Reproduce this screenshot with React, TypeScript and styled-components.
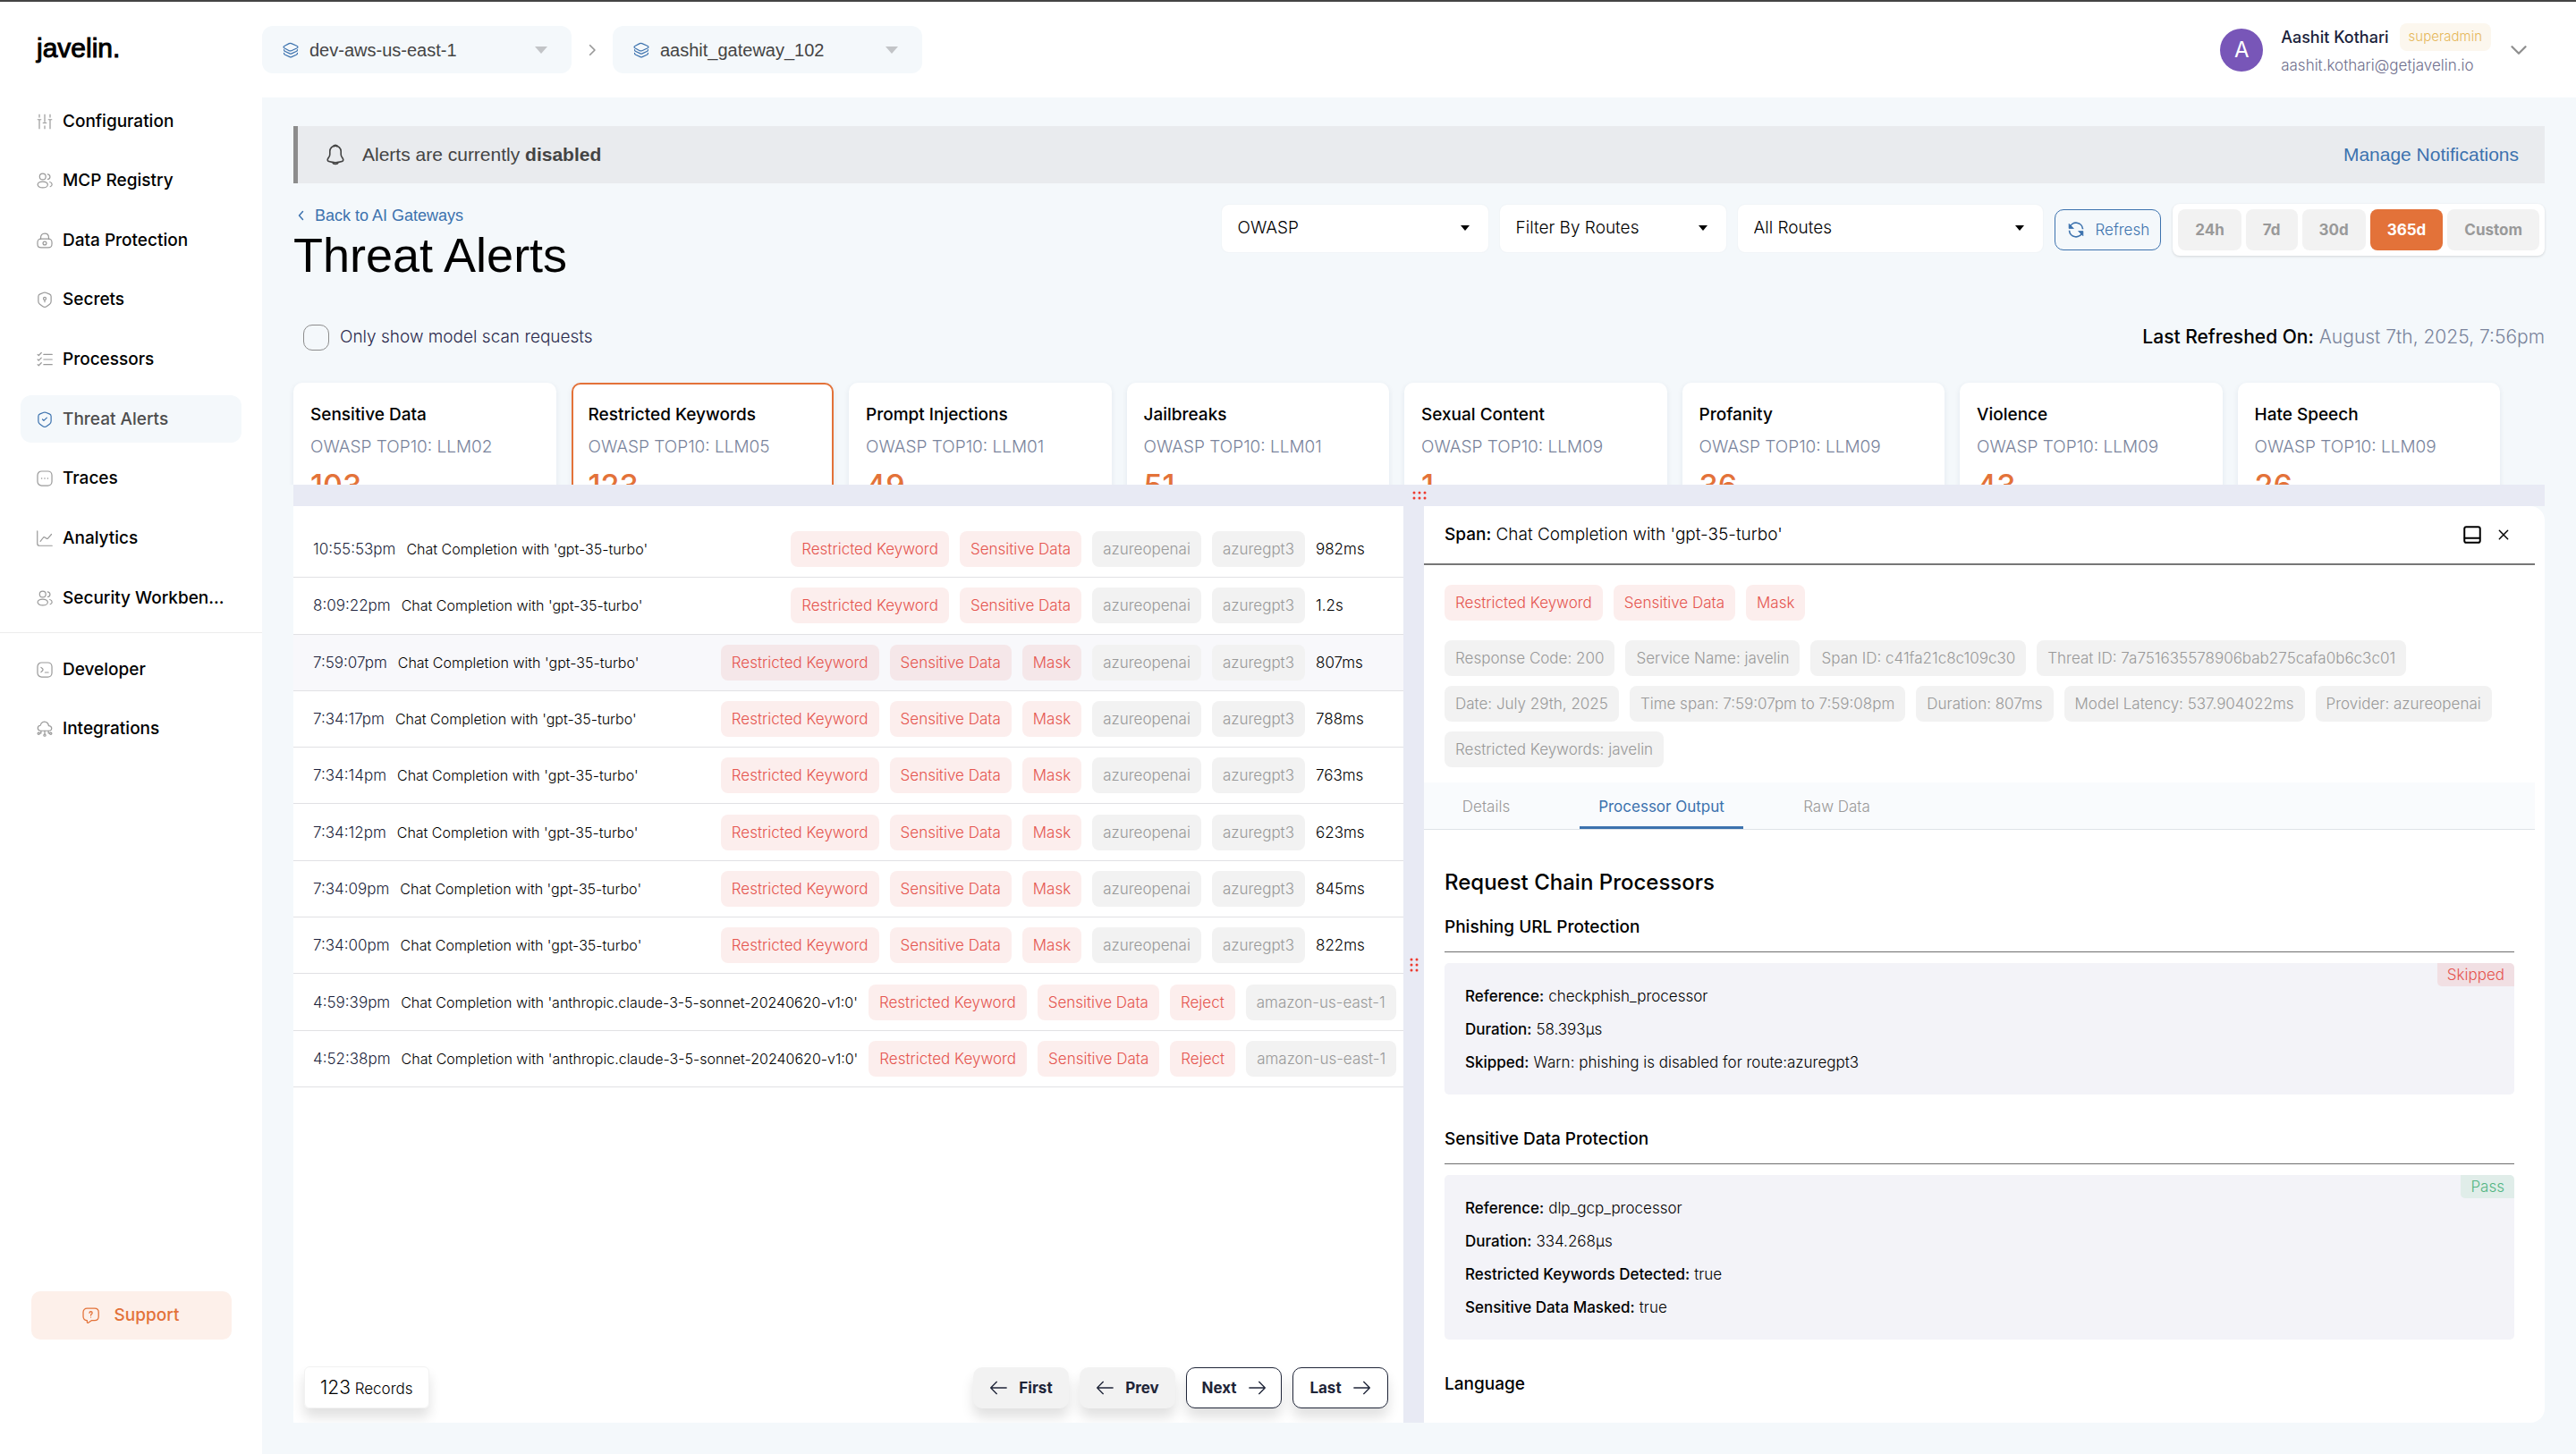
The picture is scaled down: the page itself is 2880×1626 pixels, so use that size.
import React from "react";
import styled, { createGlobalStyle, css } from "styled-components";

const color = {
  blue: "#3c72ae",
  orange: "#e37239",
  page: "#f4f8fb",
  split: "#e8eaf4",
  grey: "#999999",
  chip: "#f2f2f2",
  red: "#e5554f",
  ink: "#1f2538",
};

const grotesque = `"Liberation Sans", Arial, sans-serif`;

const GlobalStyle = createGlobalStyle`
  *, *::before, *::after { box-sizing: border-box; }
  body {
    margin: 0;
    background: ${color.page};
    color: #000;
    font-family: Inter, "Liberation Sans", sans-serif;
    font-size: 19px;
    font-weight: 400;
    line-height: 24px;
  }
  button, input, select { font: inherit; color: inherit; }
  button { border: 0; background: none; padding: 0; cursor: pointer; }
  h1, h2, h3, p, ul, ol, dl, dd { margin: 0; padding: 0; }
  ul, ol { list-style: none; }
  a { text-decoration: none; }
`;

/* ---------- icons ---------- */

const Glyph = styled.svg<{ $size?: number }>`
  display: block;
  flex: none;
  width: ${(p) => p.$size ?? 18}px;
  height: ${(p) => p.$size ?? 18}px;
  fill: none;
  stroke: currentColor;
  stroke-width: 1.6;
  stroke-linecap: round;
  stroke-linejoin: round;
`;

const paths: Record<string, React.ReactNode> = {
  sliders: (
    <path strokeLinecap="butt" d="M4 1v5M1 9h6M4 9v14M12 1v12M9 14h6M12 18v5M20 1v5M17 9h6M20 9v14" />
  ),
  users: (
    <>
      <circle cx="9" cy="6" r="4.6" />
      <ellipse cx="9" cy="18" rx="7.5" ry="4.6" />
      <path d="M16.5 2.4c2 .4 3.4 1.9 3.4 3.8s-1.400 3.400-3.200 3.700M19.600 14c2 .6 3.300 1.900 3.300 3.700 0 1.500-1 2.700-2.700 3.300" />
    </>
  ),
  lock: (
    <>
      <path d="M6 9.500V8c0-4 2-6.500 6-6.500S18 4 18 8v1.500" />
      <path d="M17 22.500H7c-4.500 0-5.700-1.200-5.700-5.500v-2c0-4.300 1.200-5.500 5.700-5.500h10c4.500 0 5.700 1.200 5.700 5.500v2c0 4.300-1.200 5.500-5.700 5.500z" />
      <circle cx="12" cy="16" r="2.600" />
    </>
  ),
  secret: (
    <>
      <path d="M10.500 1.700 5 3.800C3.600 4.300 2.500 5.900 2.500 7.400v7.300c0 1.500 1 3.400 2.200 4.300l4.600 3.200c1.500 1.100 3.900 1.100 5.400 0l4.600-3.200c1.200-.9 2.200-2.800 2.200-4.300V7.400c0-1.500-1.100-3.100-2.500-3.600l-5.500-2.100c-.9-.3-2.100-.3-3 0z" />
      <circle cx="12" cy="10.500" r="2" />
      <path d="M12 12.500v3" />
    </>
  ),
  shield: (
    <>
      <path d="M10.500 1.700 5 3.800C3.600 4.300 2.500 5.900 2.500 7.400v7.300c0 1.500 1 3.400 2.200 4.300l4.600 3.200c1.500 1.100 3.900 1.100 5.400 0l4.600-3.200c1.200-.9 2.200-2.800 2.200-4.300V7.400c0-1.500-1.100-3.100-2.500-3.600l-5.500-2.100c-.9-.3-2.100-.3-3 0z" />
      <path d="m8.700 12 1.900 1.900 4.500-4.500" />
    </>
  ),
  checks: (
    <path d="M10.500 4.500H23M10.500 12H23M10.500 19.500H23M1.500 4.500l1.500 1.500 4-4M1.500 12l1.500 1.500 4-4M1.500 19.500 3 21l4-4" />
  ),
  dots: (
    <>
      <rect x="1.300" y="1.300" width="21.400" height="21.400" rx="6" />
      <path strokeWidth="2.200" d="M7.500 12h.01M12 12h.01M16.500 12h.01" />
    </>
  ),
  chart: <path d="M1 1v18.500C1 21.500 2.500 23 4.500 23H23M5.500 16.500 9.800 11c.7-.8 1.900-1 2.700-.3l1.800 1.400c.8.700 2 .5 2.700-.3L22 6" />,
  terminal: (
    <>
      <rect x="1.300" y="1.300" width="21.400" height="21.400" rx="6" />
      <path d="m6.500 8.500 2.200 1.900c.9.800.9 2.200 0 3L6.500 15.500M12.500 16h5" />
    </>
  ),
  cloud: (
    <>
      <path d="M5.800 15C.4 14.600.4 7.300 5.600 7 6.600 2 11 .6 14 2c2.300 1 3.700 3 3.800 5.400 5.800.2 6 7.400.8 7.600z" />
      <path d="M12 15v5M6.500 15v3.500h-2M17.500 15v3.500h2" />
      <circle cx="12" cy="21.500" r="1.500" />
      <circle cx="3" cy="19" r="1.500" />
      <circle cx="21" cy="19" r="1.500" />
    </>
  ),
  layers: (
    <>
      <path d="m13 2.200 7.900 3.500c2.300 1 2.300 2.700 0 3.700L13 12.900c-.9.400-2.400.4-3.300 0L3.100 9.400c-2.300-1-2.300-2.700 0-3.700l6.600-3.500c.9-.4 2.400-.4 3.300 0z" />
      <path d="M2 11.500c0 1 .8 2.200 1.700 2.600l6.900 3.100c.9.400 1.900.4 2.800 0l6.900-3.100c.9-.4 1.700-1.600 1.700-2.600M2 16.500c0 1.100.7 2.100 1.700 2.600l6.900 3.100c.9.400 1.900.4 2.800 0l6.900-3.100c1-.500 1.700-1.500 1.700-2.600" />
    </>
  ),
  bell: (
    <>
      <path d="M12 2C8.300 2 5.800 4.800 5.800 8.300v3.300c0 .7-.3 1.700-.6 2.300l-1.600 2.600c-.8 1.300-.3 2.700 1.100 3.100 4.700 1.500 9.900 1.500 14.600 0 1.300-.4 1.900-1.900 1.100-3.100l-1.600-2.600c-.3-.6-.6-1.600-.6-2.300V8.300C18.200 4.900 15.400 2 12 2z" />
      <path d="M9 20.500c.5 2.500 5.500 2.500 6 0" />
      <path strokeWidth="2.400" d="M10.300 2.200c1-.5 2.400-.5 3.400 0" />
    </>
  ),
  refresh: (
    <g strokeWidth="2.200" strokeLinecap="butt">
      <path d="M2.500 8.500A10 10 0 0 1 22 11M2 13a10 10 0 0 0 19.500 2.500" />
      <path fill="currentColor" strokeWidth="1" d="M1.500 3v7h7zM22.500 21v-7h-7z" />
    </g>
  ),
  support: (
    <>
      <path d="M17.500 18.500H13l-4.600 3.200c-.7.500-1.600 0-1.600-.8v-2.400c-3.300 0-5.500-2.200-5.500-5.500v-6C1.300 3.700 3.500 1.500 6.800 1.500h10.700c3.300 0 5.500 2.200 5.500 5.500v6c0 3.300-2.200 5.500-5.500 5.500z" />
      <path d="M12.100 11.400v-.3c0-.8.500-1.200 1-1.600.5-.3 1-.8 1-1.500 0-1.100-.9-2-2-2s-2 .9-2 2M12.100 14h.01" />
    </>
  ),
  left: <path d="m15 3-8 9 8 9" />,
  right: <path d="m8 3 9 9-9 9" />,
  down: <path d="m2 7 10 10L22 7" />,
  arrowLeft: <path d="M2 12h21M10 4l-8 8 8 8" />,
  arrowRight: <path d="M1 12h21M14 4l8 8-8 8" />,
  close: <path d="m4 4 16 16M20 4 4 20" />,
  dock: (
    <>
      <rect x="1.500" y="1.500" width="21" height="21" rx="2.500" />
      <path d="M2 16.500h20" />
    </>
  ),
};

const Icon = ({ name, size, weight }: { name: string; size?: number; weight?: number }) => (
  <Glyph $size={size} viewBox="0 0 24 24" aria-hidden="true" style={weight ? { strokeWidth: weight } : undefined}>
    {paths[name]}
  </Glyph>
);

const Caret = styled.span<{ $wide?: boolean }>`
  border: ${(p) => (p.$wide ? 7 : 5)}px solid transparent;
  border-top: ${(p) => (p.$wide ? 8 : 6)}px solid ${(p) => (p.$wide ? "#c2c4c7" : "#000")};
  border-bottom: 0;
`;

/* ---------- shell ---------- */

const Shell = styled.div`
  display: flex;
  height: 100vh;
  border-top: 2px solid #444;
`;

const Sidebar = styled.aside`
  display: flex;
  flex-direction: column;
  flex: none;
  width: 293px;
  padding-bottom: 128px;
  background: #fff;
`;

const Logo = styled.div`
  height: 107px;
  padding: 31px 41px 0;
  font: 500 30px/42px ${grotesque};
  -webkit-text-stroke: 1px #000;
`;

const NavList = styled.ul<{ $main?: boolean }>`
  display: flex;
  flex-direction: column;
  justify-content: space-between;
  gap: 13px;
  padding: 0 23px;
  ${(p) => p.$main && css`min-height: 586px;`}
`;

const NavLink = styled.a<{ $active?: boolean }>`
  display: flex;
  align-items: center;
  gap: 11px;
  height: 53px;
  padding-left: 18px;
  border-radius: 12px;
  color: ${(p) => (p.$active ? "#4d4d4d" : "#000")};
  background: ${(p) => (p.$active ? color.page : "transparent")};
  font-weight: 500;
  white-space: nowrap;
  svg { color: ${(p) => (p.$active ? color.blue : color.grey)}; }
`;

const Divider = styled.hr`
  width: 100%;
  margin: 12px 0 14px;
  border: 0;
  border-top: 1px solid #ececec;
`;

const Support = styled.button`
  display: flex;
  align-items: center;
  justify-content: center;
  gap: 17px;
  height: 54px;
  margin: auto 34px 0 35px;
  padding-right: 2px;
  border-radius: 10px;
  background: #fdf0ea;
  color: ${color.orange};
  font-weight: 500;
`;

const Main = styled.div`
  display: flex;
  flex-direction: column;
  flex: 1;
  min-width: 0;
`;

const Header = styled.header`
  display: flex;
  align-items: center;
  flex: none;
  height: 107px;
  padding-right: 55px;
  background: #fff;
`;

const Crumbs = styled.div`
  display: flex;
  align-items: center;
  gap: 16px;
  flex: 1;
  color: ${color.grey};
`;

const Picker = styled.label<{ $width: number; $head?: boolean }>`
  display: grid;
  grid-template-columns: auto 1fr auto;
  align-items: center;
  width: ${(p) => p.$width}px;
  height: 53px;
  border-radius: ${(p) => (p.$head ? 12 : 8)}px;
  background: ${(p) => (p.$head ? color.page : "#fff")};
  color: ${(p) => (p.$head ? "#444" : "#000")};
  ${(p) => (p.$head ? "" : "margin-bottom: 4px; box-shadow: 0 0 2px rgba(0, 0, 0, 0.06);")}
  > svg { grid-area: 1 / 1; margin-left: 23px; color: ${color.blue}; pointer-events: none; }
  > span { grid-area: 1 / 3; margin-right: ${(p) => (p.$head ? 27 : 21)}px; pointer-events: none; }
  select {
    grid-area: 1 / 1 / 2 / 4;
    width: 100%;
    height: 100%;
    padding: 0 0 0 ${(p) => (p.$head ? 53 : 18)}px;
    border: 0;
    border-radius: inherit;
    background: none;
    appearance: none;
    ${(p) => (p.$head ? `font-family: ${grotesque}; font-size: 20px;` : "font-weight: 300;")}
  }
`;

const Account = styled.div`
  display: flex;
  align-items: center;
`;

const Avatar = styled.div`
  display: grid;
  place-items: center;
  width: 48px;
  height: 48px;
  margin-right: 20px;
  border-radius: 50%;
  background: #7856b8;
  color: #fff;
  font-size: 24px;
`;

const Who = styled.div`
  display: grid;
  gap: 4px;
  margin-right: 22px;
  font-size: 18px;
`;

const NameLine = styled.div`
  display: flex;
  align-items: center;
  gap: 12px;
  color: #1b1f3b;
  font-weight: 500;
`;

const Role = styled.span`
  padding: 3px 10px 4px;
  border-radius: 8px;
  background: #fcf7ee;
  color: #e6b85a;
  font-size: 15px;
  font-weight: 300;
`;

const Email = styled.div`
  color: #6f6f8d;
  font-size: 17px;
  font-weight: 300;
`;

const MenuButton = styled.button`
  color: #8f8f8f;
`;

/* ---------- page ---------- */

const Page = styled.main`
  display: flex;
  flex-direction: column;
  flex: 1;
  min-height: 0;
  padding: 32px 35px 35px;
`;

const Banner = styled.div`
  display: flex;
  align-items: center;
  flex: none;
  gap: 18px;
  height: 64px;
  padding: 0 29px 0 30px;
  border-left: 5px solid #8c8c8c;
  background: #e9ebee;
  color: #444;
  font-family: ${grotesque};
  font-size: 21px;
  p { flex: 1; }
`;

const BlueLink = styled.a`
  color: ${color.blue};
`;

const TitleRow = styled.div`
  display: flex;
  align-items: flex-start;
  justify-content: space-between;
  margin-top: 23px;
`;

const BackLink = styled(BlueLink)`
  display: flex;
  align-items: center;
  gap: 9px;
  padding: 1px 0 0 3px;
  font-family: ${grotesque};
  font-size: 18px;
`;

const Title = styled.h1`
  margin-top: 2px;
  font-family: ${grotesque};
  font-size: 54px;
  font-weight: 400;
  line-height: 60px;
`;

const Filters = styled.div`
  display: flex;
  align-items: center;
  gap: 13px;
`;

const Refresh = styled.button`
  display: flex;
  align-items: center;
  gap: 13px;
  height: 46px;
  padding: 0 12px 0 14px;
  border: 1px solid ${color.blue};
  border-radius: 10px;
  color: ${color.blue};
  font-size: 17px;
  font-weight: 300;
`;

const Ranges = styled.div`
  display: flex;
  gap: 5px;
  padding: 6px;
  border-radius: 8px;
  background: #fff;
  box-shadow: 0 1px 3px rgba(0, 0, 0, 0.14);
`;

const Range = styled.button<{ $active?: boolean }>`
  height: 46px;
  padding: 0 19px;
  border-radius: 8px;
  background: ${(p) => (p.$active ? color.orange : color.chip)};
  color: ${(p) => (p.$active ? "#fff" : color.grey)};
  font-size: 17px;
  font-weight: 700;
`;

const ScanRow = styled.div`
  display: flex;
  align-items: center;
  justify-content: space-between;
  height: 30px;
  margin-top: 47px;
  padding-left: 11px;
`;

const Check = styled.label`
  display: flex;
  align-items: center;
  gap: 12px;
  color: #2b2a4d;
  font-weight: 300;
  input {
    width: 29px;
    height: 29px;
    margin: 0;
    border: 1px solid #8c8c8c;
    border-radius: 10px;
    appearance: none;
  }
`;

const Refreshed = styled.p`
  color: #7a849c;
  font-size: 21px;
  font-weight: 300;
  strong { color: #000; font-weight: 500; }
`;

const Cards = styled.ul`
  display: grid;
  grid-template-columns: repeat(8, 1fr);
  flex: none;
  gap: 17px;
  height: 150px;
  margin: 0 -8px;
  padding: 36px 58px 0 8px;
  overflow: hidden;
`;

const Card = styled.li<{ $active?: boolean }>`
  height: 150px;
  padding: ${(p) => (p.$active ? "22px 17px" : "24px 19px")};
  border: ${(p) => (p.$active ? `2px solid ${color.orange}` : "0")};
  border-radius: 10px;
  background: #fff;
  box-shadow: 0 2px 6px rgba(30, 50, 90, 0.08);
  h2 { font-size: 19px; font-weight: 500; line-height: 24px; }
  p { margin-top: 12px; color: #7a849c; font-weight: 300; }
  strong {
    display: block;
    margin-top: 10px;
    color: ${color.orange};
    font-size: 34px;
    font-weight: 500;
    line-height: 42px;
  }
`;

const Splitter = styled.div`
  display: grid;
  place-items: center;
  flex: none;
  min-height: 24px;
  background: ${color.split};
`;

const Grip = styled.svg`
  display: block;
  fill: #ee3b2f;
`;

const Panels = styled.div`
  display: grid;
  grid-template-columns: 1241fr 23px 1253fr;
  grid-template-rows: minmax(0, 1fr);
  flex: 1;
  min-height: 0;
`;

const ListPanel = styled.section`
  display: flex;
  flex-direction: column;
  min-width: 0;
  padding-top: 17px;
  overflow: hidden;
  background: #fff;
`;

const Rows = styled.ol`
  display: grid;
  grid-auto-rows: 1fr;
  min-height: 633px;
`;

const Row = styled.li<{ $active?: boolean }>`
  display: flex;
  align-items: center;
  gap: 12px;
  padding: 0 22px;
  overflow: hidden;
  border-bottom: 1px solid #e1e1e4;
  background: ${(p) => (p.$active ? "#f8f8fb" : "transparent")};
  font-size: 17px;
  font-weight: 300;
  white-space: nowrap;
  > * { flex: none; }
  time { color: #1b1f3b; }
`;

const Name = styled.span`
  font-size: 16px;
  && { flex: 1 0 auto; }
`;

const Took = styled.span`
  width: 76px;
`;

const Tag = styled.span<{ $tone?: "red" }>`
  padding: 8px 12px;
  border-radius: 8px;
  background: ${(p) => (p.$tone ? "rgba(229, 85, 79, 0.1)" : color.chip)};
  color: ${(p) => (p.$tone ? color.red : color.grey)};
  font-size: 17px;
  font-weight: 300;
  white-space: nowrap;
`;

const Footer = styled.div`
  display: flex;
  align-items: center;
  gap: 12px;
  margin-top: auto;
  padding: 0 17px 16px 12px;
`;

const Records = styled.div`
  height: 47px;
  margin-right: auto;
  padding: 0 17px;
  border: 1px solid #f2f2f2;
  border-radius: 6px;
  box-shadow: 0 10px 14px rgba(0, 0, 0, 0.12);
  font-size: 17px;
  font-weight: 300;
  line-height: 45px;
  span { font-size: 21px; }
`;

const PageButton = styled.button<{ $off?: boolean }>`
  display: flex;
  align-items: center;
  justify-content: center;
  gap: 13px;
  min-width: 107px;
  height: 46px;
  border: ${(p) => (p.$off ? "0" : `1px solid ${color.ink}`)};
  border-radius: 10px;
  background: ${(p) => (p.$off ? color.chip : "#fff")};
  box-shadow: 0 10px 14px rgba(0, 0, 0, 0.12);
  color: ${color.ink};
  font-size: 17px;
  font-weight: 700;
`;

const DetailPanel = styled.section`
  min-width: 0;
  padding-right: 11px;
  overflow: hidden;
  border-radius: 0 16px 16px 0;
  background: #fff;
`;

const DetailHead = styled.div`
  display: flex;
  align-items: center;
  gap: 18px;
  height: 66px;
  padding: 0 28px 0 23px;
  border-bottom: 2px solid #777;
  h2 { flex: 1; font-size: 19px; font-weight: 300; }
  strong { font-weight: 500; }
`;

const TagGroup = styled.div`
  display: flex;
  flex-wrap: wrap;
  gap: 11px 12px;
  padding: 22px 23px 0;
  & + & { padding-bottom: 17px; }
`;

const Tabs = styled.div`
  display: grid;
  grid-template-columns: repeat(3, 139px);
  gap: 57px;
  justify-items: center;
  height: 53px;
  border-bottom: 1px solid #dfe3e8;
  background: #f9fbfd;
`;

const Tab = styled.button<{ $active?: boolean }>`
  padding: 4px 21px 0;
  border-bottom: 3px solid ${(p) => (p.$active ? color.blue : "transparent")};
  color: ${(p) => (p.$active ? color.blue : color.grey)};
  font-size: 17px;
  font-weight: ${(p) => (p.$active ? 400 : 300)};
  white-space: nowrap;
`;

const Chain = styled.div`
  padding: 42px 23px 0;
  > h2 { font-size: 24px; font-weight: 500; line-height: 34px; }
`;

const Processor = styled.section`
  margin-bottom: 37px;
  h3 {
    padding: 20px 0 14px;
    font-size: 19px;
    font-weight: 500;
    line-height: 26px;
  }
  & + & h3 { padding-top: 0; }
`;

const Report = styled.div`
  display: grid;
  grid-template-columns: 1fr auto;
  border-top: 1px solid #6f6f6f;
  padding-top: 12px;
`;

const Facts = styled.dl`
  display: grid;
  grid-area: 1 / 1 / 2 / 3;
  gap: 13px;
  padding: 25px 23px 24px;
  border-radius: 5px;
  background: #f3f3f8;
  font-size: 17px;
  font-weight: 300;
  div { display: flex; gap: 5px; }
  dt { font-weight: 500; }
`;

const Verdict = styled.span<{ $pass?: boolean }>`
  grid-area: 1 / 2;
  align-self: start;
  padding: 1px 11px;
  border-radius: 0 5px 0 5px;
  background: ${(p) => (p.$pass ? "rgba(60, 190, 110, 0.1)" : "rgba(229, 85, 79, 0.12)")};
  color: ${(p) => (p.$pass ? "#54b583" : color.red)};
  font-size: 17px;
  font-weight: 300;
`;

/* ---------- data ---------- */

const mainNav = [
  ["sliders", "Configuration"],
  ["users", "MCP Registry"],
  ["lock", "Data Protection"],
  ["secret", "Secrets"],
  ["checks", "Processors"],
  ["shield", "Threat Alerts"],
  ["dots", "Traces"],
  ["chart", "Analytics"],
  ["users", "Security Workben..."],
];
const extraNav = [
  ["terminal", "Developer"],
  ["cloud", "Integrations"],
];

const cards = [
  ["Sensitive Data", "LLM02", "103"],
  ["Restricted Keywords", "LLM05", "123"],
  ["Prompt Injections", "LLM01", "49"],
  ["Jailbreaks", "LLM01", "51"],
  ["Sexual Content", "LLM09", "1"],
  ["Profanity", "LLM09", "36"],
  ["Violence", "LLM09", "43"],
  ["Hate Speech", "LLM09", "26"],
];

const gpt = "Chat Completion with 'gpt-35-turbo'";
const claude = "Chat Completion with 'anthropic.claude-3-5-sonnet-20240620-v1:0'";
const azure = ["azureopenai", "azuregpt3"];
const amazon = ["amazon-us-east-1"];
const alerts: [string, string, string | null, string[], string | null][] = [
  ["10:55:53pm", gpt, null, azure, "982ms"],
  ["8:09:22pm", gpt, null, azure, "1.2s"],
  ["7:59:07pm", gpt, "Mask", azure, "807ms"],
  ["7:34:17pm", gpt, "Mask", azure, "788ms"],
  ["7:34:14pm", gpt, "Mask", azure, "763ms"],
  ["7:34:12pm", gpt, "Mask", azure, "623ms"],
  ["7:34:09pm", gpt, "Mask", azure, "845ms"],
  ["7:34:00pm", gpt, "Mask", azure, "822ms"],
  ["4:59:39pm", claude, "Reject", amazon, null],
  ["4:52:38pm", claude, "Reject", amazon, null],
];

const spanTags = [
  "Response Code: 200",
  "Service Name: javelin",
  "Span ID: c41fa21c8c109c30",
  "Threat ID: 7a751635578906bab275cafa0b6c3c01",
  "Date: July 29th, 2025",
  "Time span: 7:59:07pm to 7:59:08pm",
  "Duration: 807ms",
  "Model Latency: 537.904022ms",
  "Provider: azureopenai",
  "Restricted Keywords: javelin",
];

const processors: { name: string; verdict: string; facts: [string, string][] }[] = [
  {
    name: "Phishing URL Protection",
    verdict: "Skipped",
    facts: [
      ["Reference:", "checkphish_processor"],
      ["Duration:", "58.393µs"],
      ["Skipped:", "Warn: phishing is disabled for route:azuregpt3"],
    ],
  },
  {
    name: "Sensitive Data Protection",
    verdict: "Pass",
    facts: [
      ["Reference:", "dlp_gcp_processor"],
      ["Duration:", "334.268µs"],
      ["Restricted Keywords Detected:", "true"],
      ["Sensitive Data Masked:", "true"],
    ],
  },
];

/* ---------- parts ---------- */

const Nav = ({ items, main }: { items: string[][]; main?: boolean }) => (
  <NavList $main={main}>
    {items.map(([icon, label]) => (
      <li key={label}>
        <NavLink href="#" $active={label === "Threat Alerts"}>
          <Icon name={icon} />
          {label}
        </NavLink>
      </li>
    ))}
  </NavList>
);

const Select = ({ label, value, width, head }: { label: string; value: string; width: number; head?: boolean }) => (
  <Picker $width={width} $head={head}>
    {head && <Icon name="layers" />}
    <Caret $wide={head} />
    <select aria-label={label} defaultValue={value}>
      <option>{value}</option>
    </select>
  </Picker>
);

const GripDots = ({ cols, rows }: { cols: number; rows: number }) => (
  <Grip width={cols * 6} height={rows * 6} viewBox={`0 0 ${cols * 6} ${rows * 6}`} aria-hidden="true">
    {Array.from({ length: cols * rows }, (_, i) => (
      <circle key={i} cx={(i % cols) * 6 + 3} cy={Math.floor(i / cols) * 6 + 3} r="1.500" />
    ))}
  </Grip>
);

export default function App() {
  return (
    <>
      <GlobalStyle />
      <Shell>
        <Sidebar>
          <Logo>javelin.</Logo>
          <Nav items={mainNav} main />
          <Divider />
          <Nav items={extraNav} />
          <Support>
            <Icon name="support" size={19} />
            Support
          </Support>
        </Sidebar>
        <Main>
          <Header>
            <Crumbs>
              <Select label="Environment" value="dev-aws-us-east-1" width={346} head />
              <Icon name="right" size={14} weight={3} />
              <Select label="Gateway" value="aashit_gateway_102" width={346} head />
            </Crumbs>
            <Account>
              <Avatar>A</Avatar>
              <Who>
                <NameLine>
                  Aashit Kothari <Role>superadmin</Role>
                </NameLine>
                <Email>aashit.kothari@getjavelin.io</Email>
              </Who>
              <MenuButton aria-label="Account menu">
                <Icon name="down" weight={3} />
              </MenuButton>
            </Account>
          </Header>
          <Page>
            <Banner>
              <Icon name="bell" size={24} />
              <p>
                Alerts are currently <b>disabled</b>
              </p>
              <BlueLink href="#">Manage Notifications</BlueLink>
            </Banner>
            <TitleRow>
              <div>
                <BackLink href="#">
                  <Icon name="left" size={12} weight={3} />
                  Back to AI Gateways
                </BackLink>
                <Title>Threat Alerts</Title>
              </div>
              <Filters>
                <Select label="Category" value="OWASP" width={298} />
                <Select label="Filter" value="Filter By Routes" width={253} />
                <Select label="Route" value="All Routes" width={341} />
                <Refresh>
                  <Icon name="refresh" />
                  Refresh
                </Refresh>
                <Ranges>
                  {["24h", "7d", "30d", "365d", "Custom"].map((r) => (
                    <Range key={r} $active={r === "365d"}>
                      {r}
                    </Range>
                  ))}
                </Ranges>
              </Filters>
            </TitleRow>
            <ScanRow>
              <Check>
                <input type="checkbox" />
                Only show model scan requests
              </Check>
              <Refreshed>
                <strong>Last Refreshed On:</strong> August 7th, 2025, 7:56pm
              </Refreshed>
            </ScanRow>
            <Cards>
              {cards.map(([name, code, count]) => (
                <Card key={name} $active={name === "Restricted Keywords"}>
                  <h2>{name}</h2>
                  <p>OWASP TOP10: {code}</p>
                  <strong>{count}</strong>
                </Card>
              ))}
            </Cards>
            <Splitter>
              <GripDots cols={3} rows={2} />
            </Splitter>
            <Panels>
              <ListPanel>
                <Rows>
                  {alerts.map(([time, name, action, hosts, took]) => (
                    <Row key={time} $active={time === "7:59:07pm"}>
                      <time>{time}</time>
                      <Name>{name}</Name>
                      <Tag $tone="red">Restricted Keyword</Tag>
                      <Tag $tone="red">Sensitive Data</Tag>
                      {action && <Tag $tone="red">{action}</Tag>}
                      {hosts.map((h) => (
                        <Tag key={h}>{h}</Tag>
                      ))}
                      {took && <Took>{took}</Took>}
                    </Row>
                  ))}
                </Rows>
                <Footer>
                  <Records>
                    <span>123</span> Records
                  </Records>
                  <PageButton $off>
                    <Icon name="arrowLeft" size={20} />
                    First
                  </PageButton>
                  <PageButton $off>
                    <Icon name="arrowLeft" size={20} />
                    Prev
                  </PageButton>
                  <PageButton>
                    Next
                    <Icon name="arrowRight" size={20} />
                  </PageButton>
                  <PageButton>
                    Last
                    <Icon name="arrowRight" size={20} />
                  </PageButton>
                </Footer>
              </ListPanel>
              <Splitter>
                <GripDots cols={2} rows={3} />
              </Splitter>
              <DetailPanel>
                <DetailHead>
                  <h2>
                    <strong>Span:</strong> {gpt}
                  </h2>
                  <button aria-label="Dock to bottom">
                    <Icon name="dock" size={20} weight={2.4} />
                  </button>
                  <button aria-label="Close">
                    <Icon name="close" size={14} weight={2.4} />
                  </button>
                </DetailHead>
                <TagGroup>
                  {["Restricted Keyword", "Sensitive Data", "Mask"].map((t) => (
                    <Tag key={t} $tone="red">
                      {t}
                    </Tag>
                  ))}
                </TagGroup>
                <TagGroup>
                  {spanTags.map((t) => (
                    <Tag key={t}>{t}</Tag>
                  ))}
                </TagGroup>
                <Tabs role="tablist">
                  {["Details", "Processor Output", "Raw Data"].map((t) => (
                    <Tab key={t} role="tab" $active={t === "Processor Output"}>
                      {t}
                    </Tab>
                  ))}
                </Tabs>
                <Chain>
                  <h2>Request Chain Processors</h2>
                  {processors.map((p) => (
                    <Processor key={p.name}>
                      <h3>{p.name}</h3>
                      <Report>
                        <Facts>
                          {p.facts.map(([k, v]) => (
                            <div key={k}>
                              <dt>{k}</dt>
                              <dd>{v}</dd>
                            </div>
                          ))}
                        </Facts>
                        <Verdict $pass={p.verdict === "Pass"}>{p.verdict}</Verdict>
                      </Report>
                    </Processor>
                  ))}
                  <Processor>
                    <h3>Language</h3>
                  </Processor>
                </Chain>
              </DetailPanel>
            </Panels>
          </Page>
        </Main>
      </Shell>
    </>
  );
}
